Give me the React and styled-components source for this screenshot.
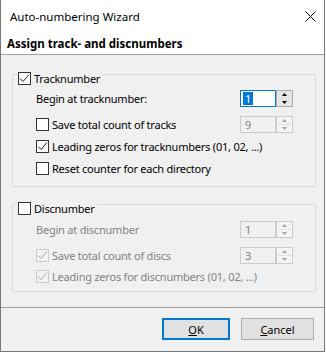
import React from 'react';
import styled, { createGlobalStyle } from 'styled-components';

const GlobalStyle = createGlobalStyle`
  * { box-sizing: border-box; }
  html, body { margin: 0; padding: 0; background: #fff; }
  body {
    font-family: "Segoe UI", "Noto Sans", "Liberation Sans", sans-serif;
    font-size: 11px;
    color: #000;
  }
`;

const Window = styled.div`
  width: 325px;
  height: 352px;
  display: flex;
  flex-direction: column;
  background: #f0f0f0;
  border: 1px solid #777;
  border-top: none;
`;

const TitleBar = styled.div`
  height: 32px;
  flex: none;
  display: flex;
  align-items: center;
  justify-content: space-between;
  padding: 0 8px 0 9px;
  background: #fff;
  font-size: 11.5px;
`;

const Header = styled.div`
  height: 23px;
  flex: none;
  display: flex;
  align-items: center;
  padding-left: 6px;
  background: #fff;
  font-size: 11.5px;
  font-weight: bold;
  border-bottom: 1px solid #a0a0a0;
`;

const Body = styled.div`
  flex: 1;
  display: flex;
  flex-direction: column;
  gap: 17px;
  padding: 19px 8px 0 11px;
  letter-spacing: -0.22px;
`;

const Group = styled.div`
  display: flex;
  flex-direction: column;
  border: 1px solid #dcdcdc;
  padding-bottom: ${(p) => p.$bottom}px;
`;

const Legend = styled.div`
  align-self: flex-start;
  display: flex;
  align-items: center;
  height: 13px;
  margin: -3px 0 0 4px;
  padding: 0 2px 0 1px;
  background: #f0f0f0;
`;

const Row = styled.div`
  display: flex;
  align-items: center;
  justify-content: space-between;
  margin-top: ${(p) => p.$top}px;
  height: ${(p) => p.$h}px;
  padding: 0 22px 0 23px;
`;

const Label = styled.label`
  display: flex;
  align-items: center;
  gap: 3px;
  color: ${(p) => (p.$disabled ? '#838383' : '#000')};
  white-space: nowrap;
`;

const Box = styled.span`
  width: 13px;
  height: 13px;
  flex: none;
  display: flex;
  align-items: center;
  justify-content: center;
  background: ${(p) => (p.$disabled ? '#f3f3f3' : '#fff')};
  border: 1px solid ${(p) => (p.$disabled ? '#cccccc' : '#333')};
`;

const Spin = styled.div`
  display: flex;
  width: 53px;
  height: 17px;
  letter-spacing: 0;
`;

const Field = styled.div`
  flex: 1;
  display: flex;
  align-items: center;
  padding-left: ${(p) => (p.$focused ? 2 : 4)}px;
  border: 1px solid ${(p) => (p.$focused ? '#0078d7' : '#cccccc')};
  background: ${(p) => (p.$focused ? '#fff' : '#f0f0f0')};
  color: ${(p) => (p.$disabled ? '#838383' : '#000')};
`;

const Selection = styled.span`
  background: #0078d7;
  color: #fff;
  padding: 0 2px;
  line-height: 13px;
`;

const Spinner = styled.div`
  width: 17px;
  flex: none;
  display: flex;
  flex-direction: column;
  border: 1px solid ${(p) => (p.$disabled ? '#cccccc' : '#adadad')};
  background: ${(p) => (p.$disabled ? '#f4f4f4' : '#e5e5e5')};
`;

const SpinHalf = styled.div`
  flex: 1;
  display: flex;
  align-items: center;
  justify-content: center;
  & + & {
    border-top: 1px solid ${(p) => (p.$disabled ? '#e0e0e0' : '#c8c8c8')};
  }
`;

const Footer = styled.div`
  height: 44px;
  flex: none;
  display: flex;
  justify-content: flex-end;
  align-items: flex-start;
  gap: 11px;
  padding: 10px 10px 0 0;
  border-top: 1px solid #a0a0a0;
`;

const Button = styled.button`
  width: ${(p) => p.$w}px;
  height: 22px;
  padding: 0;
  font: inherit;
  color: #000;
  background: #e1e1e1;
  border: ${(p) => (p.$default ? '2px solid #0078d7' : '1px solid #adadad')};
`;

const Check = ({ color }) => (
  <svg width="11" height="11" viewBox="0 0 11 11">
    <polyline
      points="1,5.5 4,8.5 10,1.5"
      fill="none"
      stroke={color}
      strokeWidth="1"
    />
  </svg>
);

const Checkbox = ({ checked, disabled, children }) => (
  <Label $disabled={disabled}>
    <Box $disabled={disabled}>
      {checked && <Check color={disabled ? '#a8a8a8' : '#222'} />}
    </Box>
    {children}
  </Label>
);

const Arrow = ({ up, color }) => (
  <svg width="5" height="3" viewBox="0 0 5 3">
    <polygon points={up ? '2.5,0 5,3 0,3' : '0,0 5,0 2.5,3'} fill={color} />
  </svg>
);

const SpinEdit = ({ value, focused, disabled }) => {
  const color = disabled ? '#a6a6a6' : '#000';
  return (
    <Spin>
      <Field $focused={focused} $disabled={disabled}>
        {focused ? <Selection>{value}</Selection> : value}
      </Field>
      <Spinner $disabled={disabled}>
        <SpinHalf $disabled={disabled}>
          <Arrow up color={color} />
        </SpinHalf>
        <SpinHalf $disabled={disabled}>
          <Arrow color={color} />
        </SpinHalf>
      </Spinner>
    </Spin>
  );
};

const CloseIcon = () => (
  <svg width="11" height="11" viewBox="0 0 11 11">
    <path d="M0.5 0.5 L10.5 10.5 M10.5 0.5 L0.5 10.5" stroke="#000" strokeWidth="1" />
  </svg>
);

export default function App() {
  return (
    <>
      <GlobalStyle />
      <Window>
        <TitleBar>
          <span>Auto-numbering Wizard</span>
          <CloseIcon />
        </TitleBar>
        <Header>Assign track- and discnumbers</Header>
        <Body>
          <Group $bottom={11}>
            <Legend>
              <Checkbox checked>Tracknumber</Checkbox>
            </Legend>
            <Row $top={5} $h={17}>
              <Label as="span">Begin at tracknumber:</Label>
              <SpinEdit value="1" focused />
            </Row>
            <Row $top={9} $h={17}>
              <Checkbox>Save total count of tracks</Checkbox>
              <SpinEdit value="9" disabled />
            </Row>
            <Row $top={7} $h={13}>
              <Checkbox checked>Leading zeros for tracknumbers (01, 02, ...)</Checkbox>
            </Row>
            <Row $top={9} $h={13}>
              <Checkbox>Reset counter for each directory</Checkbox>
            </Row>
          </Group>
          <Group $bottom={8}>
            <Legend>
              <Checkbox>Discnumber</Checkbox>
            </Legend>
            <Row $top={6} $h={17}>
              <Label as="span" $disabled>
                Begin at discnumber
              </Label>
              <SpinEdit value="1" disabled />
            </Row>
            <Row $top={9} $h={17}>
              <Checkbox checked disabled>
                Save total count of discs
              </Checkbox>
              <SpinEdit value="3" disabled />
            </Row>
            <Row $top={6} $h={13}>
              <Checkbox checked disabled>
                Leading zeros for discnumbers (01, 02, ...)
              </Checkbox>
            </Row>
          </Group>
        </Body>
        <Footer>
          <Button $default $w={68}>
            <u>O</u>K
          </Button>
          <Button $w={73}>
            <u>C</u>ancel
          </Button>
        </Footer>
      </Window>
    </>
  );
}
